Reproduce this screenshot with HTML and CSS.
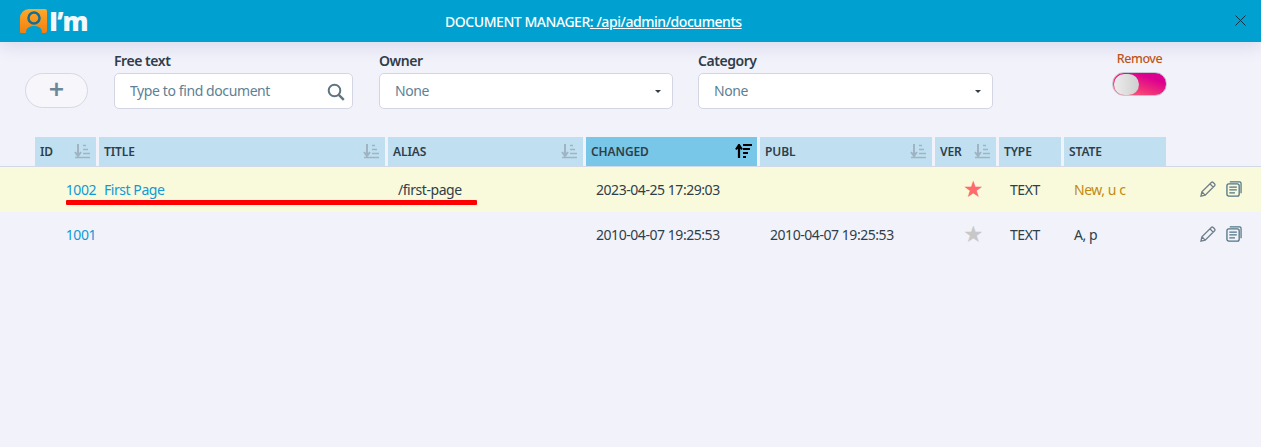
FILE: index.html
```html
<!DOCTYPE html>
<html lang="en">
<head>
    <meta charset="UTF-8">
    <title>Document manager</title>
    <link rel="stylesheet" href="styles.css">
</head>
<body>

<svg class="icon-defs" width="0" height="0">
    <symbol id="sort-idle" viewBox="0 0 17 16">
        <path d="M4 0v11M1 8l3 4 3-4" fill="none" stroke="currentColor" stroke-width="2"/>
        <path d="M9 1.500h3M9 5.500h5M9 9.500h7M1 13.500h15" fill="none" stroke="currentColor" stroke-width="1.500"/>
    </symbol>
    <symbol id="edit" viewBox="0 0 17 17">
        <path d="M1 16l1-4.500L12 1.500a1.500 1.500 0 0 1 2 0l1.500 1.500a1.500 1.500 0 0 1 0 2L5.500 15zM2 11.500L5.500 15M10.500 3l3.500 3.500" fill="none" stroke="currentColor" stroke-width="1.400"/>
    </symbol>
    <symbol id="copy" viewBox="0 0 17 17">
        <rect x="1" y="3" width="13" height="13" rx="2" fill="none" stroke="currentColor" stroke-width="1.400"/>
        <path d="M4 1h10.500a1.500 1.500 0 0 1 1.500 1.500V13M3.500 6.500h8M3.500 9.500h8M3.500 12.500h6" fill="none" stroke="currentColor" stroke-width="1.300"/>
    </symbol>
</svg>

<header class="topbar">
    <div class="logo">
        <svg width="28" height="25" viewBox="0 0 28 25">
            <defs>
                <linearGradient id="logoFill" x1="0" y1="0" x2="0" y2="1">
                    <stop offset="0" stop-color="#ffa92a"/>
                    <stop offset="1" stop-color="#f27f10"/>
                </linearGradient>
            </defs>
            <path d="M9 0h16a2 2 0 0 1 2 2v20a2 2 0 0 1-2 2h-3c0-5-3-7-8-7s-8 2-8 7H1a1 1 0 0 1-1-1V9a9 9 0 0 1 9-9z" fill="url(#logoFill)"/>
            <circle cx="14" cy="9" r="5.500" fill="none" stroke="#0f6f95" stroke-width="2.500"/>
        </svg>
        <span class="logo-text">I’m</span>
    </div>
    <div class="topbar-title">DOCUMENT MANAGER<a href="#">: /api/admin/documents</a></div>
    <svg class="close" width="11" height="11" viewBox="0 0 11 11">
        <path d="M.5.500l10 10M10.500.500l-10 10" stroke="#10303f" stroke-width="1"/>
    </svg>
</header>

<section class="filters">
    <button class="add-btn" type="button">+</button>

    <div class="field field-text">
        <label for="free">Free text</label>
        <div class="search">
            <input id="free" type="text" placeholder="Type to find document">
            <svg width="18" height="18" viewBox="0 0 18 18">
                <circle cx="7.500" cy="7.500" r="5.800" fill="none" stroke="#5f7480" stroke-width="2"/>
                <path d="M11.800 11.800l5 5" stroke="#5f7480" stroke-width="2.400"/>
            </svg>
        </div>
    </div>

    <div class="field field-owner">
        <label for="owner">Owner</label>
        <div class="select-wrap">
            <select id="owner"><option>None</option></select>
        </div>
    </div>

    <div class="field field-category">
        <label for="category">Category</label>
        <div class="select-wrap">
            <select id="category"><option>None</option></select>
        </div>
    </div>

    <div class="remove">
        <span class="remove-label">Remove</span>
        <div class="toggle"><div class="knob"></div></div>
    </div>
</section>

<section class="docs">
    <div class="row head">
        <div class="th">ID <svg class="sort"><use href="#sort-idle"/></svg></div>
        <div class="th">TITLE <svg class="sort"><use href="#sort-idle"/></svg></div>
        <div class="th">ALIAS <svg class="sort"><use href="#sort-idle"/></svg></div>
        <div class="th active">CHANGED
            <svg class="sort sort-on" viewBox="0 0 17 16">
                <path d="M4 14V2M1 5.500l3-4.500 3 4.500" fill="none" stroke="currentColor" stroke-width="2.200"/>
                <path d="M8 1h9M8 5h7M8 9h5M8 13h3" fill="none" stroke="currentColor" stroke-width="2"/>
            </svg>
        </div>
        <div class="th">PUBL <svg class="sort"><use href="#sort-idle"/></svg></div>
        <div class="th">VER <svg class="sort"><use href="#sort-idle"/></svg></div>
        <div class="th">TYPE</div>
        <div class="th">STATE</div>
    </div>

    <div class="row doc doc-new">
        <div class="td td-id"><a href="#">1002</a></div>
        <div class="td td-title"><a href="#">First Page</a></div>
        <div class="td td-alias">/first-page</div>
        <div class="td td-date">2023-04-25 17:29:03</div>
        <div class="td td-date"></div>
        <div class="td td-ver"><span class="star star-on">★</span></div>
        <div class="td td-type">TEXT</div>
        <div class="td td-state state-new">New, u c</div>
        <div class="actions">
            <svg><use href="#edit"/></svg>
            <svg class="copy"><use href="#copy"/></svg>
        </div>
        <div class="redline"></div>
    </div>

    <div class="row doc">
        <div class="td td-id"><a href="#">1001</a></div>
        <div class="td td-title"></div>
        <div class="td td-alias"></div>
        <div class="td td-date">2010-04-07 19:25:53</div>
        <div class="td td-date">2010-04-07 19:25:53</div>
        <div class="td td-ver"><span class="star">★</span></div>
        <div class="td td-type">TEXT</div>
        <div class="td td-state">A, p</div>
        <div class="actions">
            <svg><use href="#edit"/></svg>
            <svg class="copy"><use href="#copy"/></svg>
        </div>
    </div>
</section>

</body>
</html>
```

FILE: styles.css
```css
html, body {
    margin: 0;
    height: 100%;
    overflow: hidden;
}
body {
    background-color: #f2f2fb;
    color: #2f3e49;
    font-family: "Noto Sans", sans-serif;
    font-size: 14px;
    letter-spacing: -0.45px;
}
a {
    color: inherit;
    text-decoration: none;
}
.icon-defs {
    position: absolute;
}

/* Top bar */
.topbar {
    position: relative;
    display: flex;
    align-items: center;
    height: 42px;
    padding-left: 20px;
    padding-right: 15px;
    box-sizing: border-box;
    background-color: #00a1d0;
    color: #fff;
    box-shadow: 0 2px 20px rgba(30, 30, 110, 0.14);
}
.logo {
    display: flex;
    align-items: center;
    width: 425px;
    height: 25px;
}
.logo-text {
    margin-left: 1px;
    font-family: "Open Sans", sans-serif;
    font-size: 26px;
    font-weight: 800;
    line-height: 25px;
    letter-spacing: -1px;
    color: #f4f8fa;
}
.topbar-title {
    flex: 1;
    font-size: 14px;
    font-weight: 500;
}
.topbar-title a {
    text-decoration: underline;
}

/* Filters */
.filters {
    display: flex;
    align-items: flex-start;
    height: 95px;
    padding: 8px 0 0 25px;
    box-sizing: border-box;
}
.add-btn {
    width: 63px;
    height: 35px;
    margin-top: 23px;
    margin-right: 26px;
    padding: 0 0 3px;
    border: 1px solid #d6d8e4;
    border-radius: 18px;
    background-color: #f6f6fb;
    color: #6c8797;
    font-family: "Noto Sans", sans-serif;
    font-size: 27px;
    font-weight: 600;
    line-height: 28px;
}
.field label {
    display: block;
    height: 23px;
    font-weight: 600;
    line-height: 22px;
}
.field-text {
    width: 239px;
    margin-right: 26px;
}
.field-owner {
    width: 294px;
    margin-right: 25px;
}
.field-category {
    width: 295px;
}
.search,
.select-wrap {
    position: relative;
    height: 36px;
}
.search input,
.select-wrap select {
    width: 100%;
    height: 100%;
    box-sizing: border-box;
    padding: 0 15px 2px;
    border: 1px solid #d3d5e2;
    border-radius: 5px;
    background-color: #fff;
    color: #5e7f95;
    font-family: "Noto Sans", sans-serif;
    font-size: 14px;
    letter-spacing: -0.4px;
    outline: none;
    appearance: none;
}
.search input::placeholder {
    color: #5e7f95;
    opacity: 1;
}
.search svg {
    position: absolute;
    top: 10px;
    right: 8px;
}
.select-wrap::after {
    content: "";
    position: absolute;
    top: 17px;
    right: 12px;
    border-top: 3px solid #2f3e49;
    border-left: 3px solid transparent;
    border-right: 3px solid transparent;
}
.remove {
    display: flex;
    flex-direction: column;
    align-items: center;
    width: 55px;
    margin-left: 119px;
}
.remove-label {
    height: 15px;
    margin-top: 1px;
    margin-bottom: 6px;
    color: #c0561a;
    font-size: 12.5px;
    font-weight: 500;
    line-height: 15px;
    white-space: nowrap;
}
.toggle {
    display: flex;
    align-items: center;
    width: 53px;
    height: 22px;
    border: 1px solid #c9c6d4;
    border-radius: 12px;
    background: linear-gradient(20deg, #ff6f7d 0%, #f0307a 40%, #dc0090 75%);
}
.knob {
    width: 25px;
    height: 21px;
    margin-left: 1px;
    border-radius: 11px;
    background: linear-gradient(90deg, #ededed, #cfcfcf);
}

/* Table */
.row {
    position: relative;
    display: grid;
    grid-template-columns: 61px 286px 195px 171px 172px 61px 62px 102px;
    column-gap: 3px;
    padding-left: 35px;
}
.head {
    height: 30px;
    border-bottom: 1px solid #d3d8e6;
    box-sizing: border-box;
}
.th {
    display: flex;
    align-items: center;
    justify-content: space-between;
    height: 29px;
    padding: 0 5px;
    box-sizing: border-box;
    background-color: #c0e0f2;
    color: #2f3e49;
    font-size: 12px;
    font-weight: 600;
    letter-spacing: -0.1px;
}
.th.active {
    background-color: #78c6e8;
}
.sort {
    width: 17px;
    height: 16px;
    margin-top: 1px;
    color: #9fb3c2;
}
.sort-on {
    color: #000;
}
.doc {
    height: 45px;
    align-items: center;
}
.doc-new {
    background-color: #f9f9dc;
}
.td {
    white-space: nowrap;
}
.td a {
    color: #0f9ad6;
}
.td-id {
    text-align: right;
}
.td-title {
    padding-left: 5px;
}
.td-alias {
    padding-left: 10px;
}
.td-date {
    padding-left: 10px;
}
.td-ver {
    text-align: center;
    padding-left: 15px;
}
.td-type {
    padding-left: 11px;
}
.td-state {
    padding-left: 10px;
}
.state-new {
    color: #c28a10;
}
.star {
    color: #c8c8c8;
    font-family: "DejaVu Sans", sans-serif;
    font-size: 23px;
    line-height: 20px;
}
.star-on {
    color: #ff6b6b;
}
.actions {
    position: absolute;
    top: 14px;
    left: 1200px;
    display: flex;
    gap: 10px;
}
.actions svg {
    width: 16px;
    height: 16px;
    color: #6f7f88;
}
.actions .copy {
    color: #4f7585;
}
.redline {
    position: absolute;
    left: 66px;
    top: 33px;
    width: 411px;
    height: 5px;
    border-radius: 1px;
    background-color: #f00;
}

.close {
    position: absolute;
    top: 15px;
    right: 15px;
}
```
